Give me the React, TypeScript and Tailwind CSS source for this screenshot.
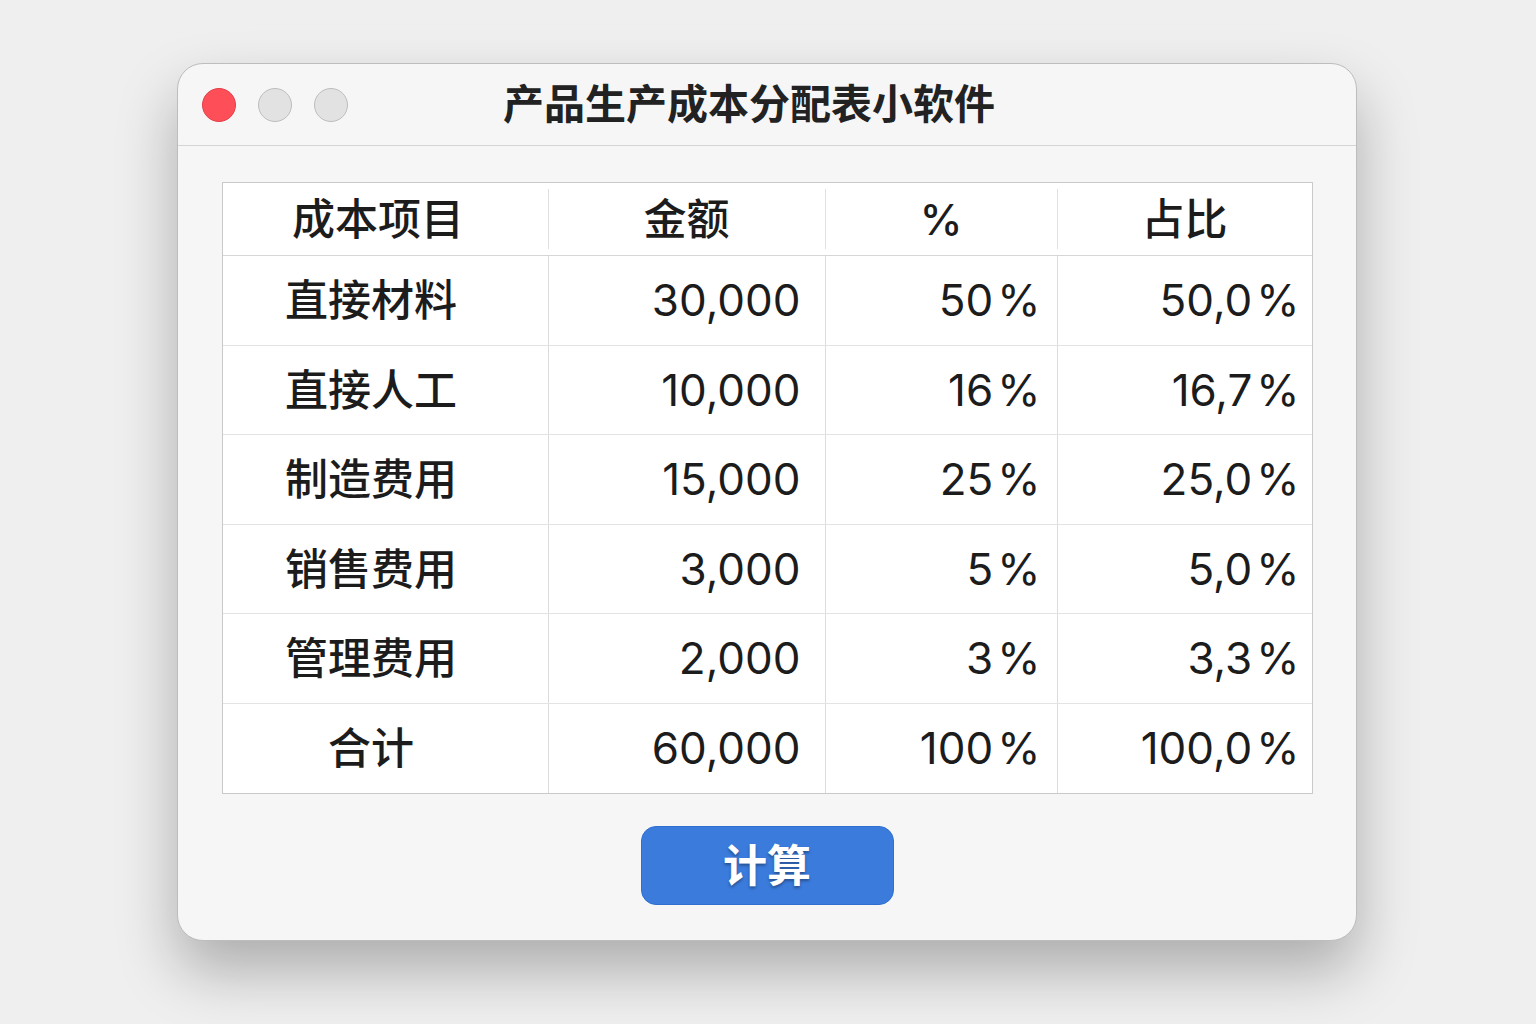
const rows: Array<{ name: string; amount: string; pct: string; share: string }> = [
  { name: "直接材料", amount: "30,000", pct: "50", share: "50,0" },
  { name: "直接人工", amount: "10,000", pct: "16", share: "16,7" },
  { name: "制造费用", amount: "15,000", pct: "25", share: "25,0" },
  { name: "销售费用", amount: "3,000", pct: "5", share: "5,0" },
  { name: "管理费用", amount: "2,000", pct: "3", share: "3,3" },
  { name: "合计", amount: "60,000", pct: "100", share: "100,0" },
];

const font = "font-['Inter','Noto_Sans_CJK_SC',sans-serif]";

function Pct({ value }: { value: string }) {
  return (
    <span>
      {value}
      <span className="ml-[4px]">%</span>
    </span>
  );
}

export default function App() {
  return (
    <div className={`min-h-screen bg-[#efefef] pt-[63px] ${font}`}>
      <div className="ml-[177px] flex h-[878px] w-[1180px] flex-col overflow-hidden rounded-[26px] border border-[#bdbdbd] bg-[#f6f6f6] shadow-[0_30px_60px_rgba(0,0,0,0.28)]">
        {/* title bar */}
        <div className="relative flex h-[82px] shrink-0 items-center border-b border-[#d4d4d4] pl-[24px]">
          <div className="flex gap-[22px]">
            <span className="h-[34px] w-[34px] rounded-full border border-[#e0404a] bg-[#fe4f58]" />
            <span className="h-[34px] w-[34px] rounded-full border border-[#bdbdbd] bg-[#e2e2e2]" />
            <span className="h-[34px] w-[34px] rounded-full border border-[#bdbdbd] bg-[#e2e2e2]" />
          </div>
          <h1 className="absolute inset-x-0 top-0 flex h-full items-center justify-center pr-[36px] text-[41px] font-semibold text-[#222]">
            产品生产成本分配表小软件
          </h1>
        </div>

        {/* body */}
        <div className="flex flex-col items-center pt-[36px]">
          <div className="w-[1091px] border border-[#c9c9c9] bg-white text-[43px] text-[#1c1c1c]">
            <div className="flex h-[73px] items-center border-b border-[#d6d6d6] font-medium">
              <div className="w-[325px] pr-[14px] text-center">成本项目</div>
              <div className="h-[60px] w-px bg-[#e0e0e0]" />
              <div className="w-[276px] text-center">金额</div>
              <div className="h-[60px] w-px bg-[#e0e0e0]" />
              <div className="w-[231px] text-center">%</div>
              <div className="h-[60px] w-px bg-[#e0e0e0]" />
              <div className="flex-1 text-center">占比</div>
            </div>
            {rows.map((r, i) => (
              <div
                key={r.name}
                className={`grid h-[89.5px] grid-cols-[325px_277px_232px_1fr] ${
                  i < rows.length - 1 ? "border-b border-[#e3e3e3]" : ""
                }`}
              >
                <div className="flex items-center justify-center pr-[28px] font-medium">{r.name}</div>
                <div className="flex items-center justify-end border-l border-[#dcdcdc] pr-[24px] text-[44px]">
                  {r.amount}
                </div>
                <div className="flex items-center justify-end border-l border-[#dcdcdc] pr-[16px] text-[44px]">
                  <Pct value={r.pct} />
                </div>
                <div className="flex items-center justify-end border-l border-[#dcdcdc] pr-[12px] text-[44px]">
                  <Pct value={r.share} />
                </div>
              </div>
            ))}
          </div>

          <button className="mt-[32px] flex h-[79px] w-[253px] items-center justify-center rounded-[15px] border border-[#2f6fd0] bg-[#3a7bdc] text-[44px] font-bold text-white [text-shadow:0_2px_3px_rgba(0,0,0,0.35)]">
            计算
          </button>
        </div>
      </div>
    </div>
  );
}
